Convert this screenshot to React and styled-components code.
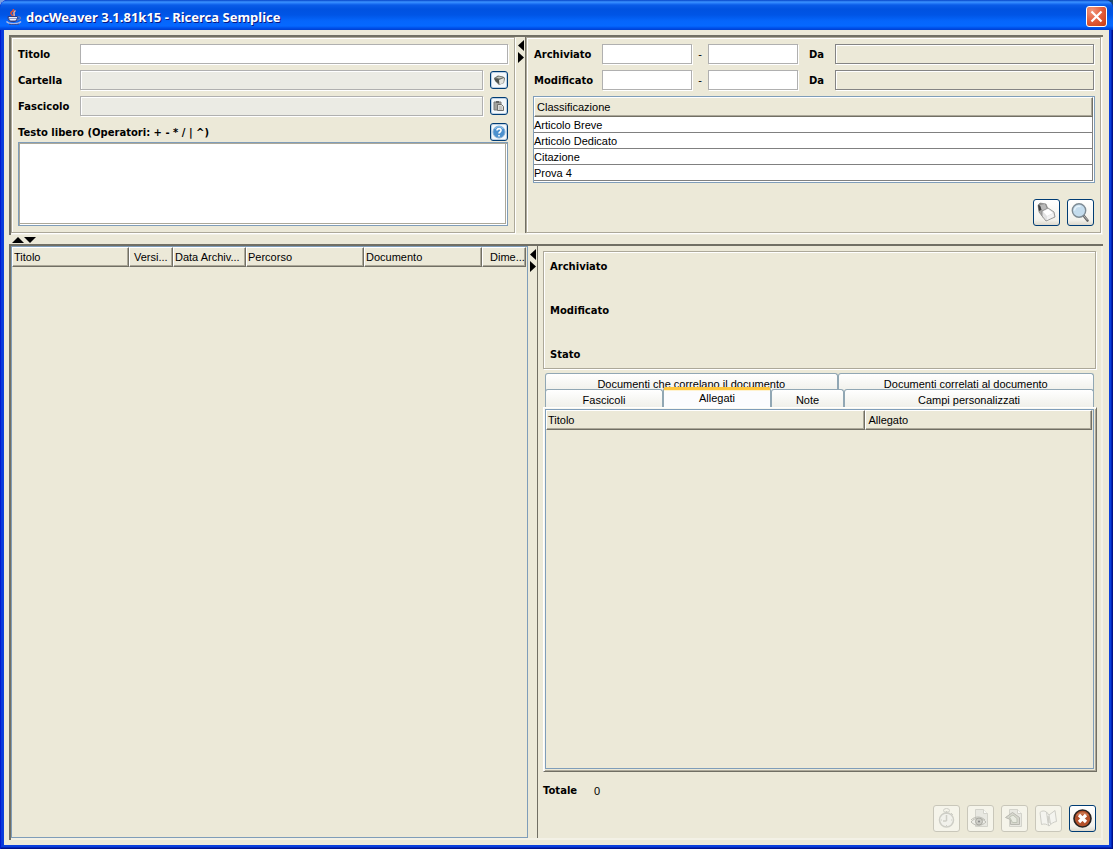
import styled, { createGlobalStyle, css } from "styled-components";

const face = "#ece9d8";
const dark = "#716f64";
const shade = "#aca899";
const blue = "#7f9db9";

const GlobalStyle = createGlobalStyle`
  * {
    box-sizing: border-box;
  }

  body {
    margin: 0;
    background: linear-gradient(90deg, #7d9fe0, #17466f);
    color: black;
    font-family: "Liberation Sans", Arial, sans-serif;
    font-size: 11px;
    line-height: 14px;
  }

  button,
  input,
  textarea {
    margin: 0;
    color: inherit;
    font: inherit;
  }
`;

const Window = styled.main`
  display: flex;
  flex-direction: column;
  min-height: 100vh;
  padding: 0 4px 4px;
  border-radius: 8px 8px 0 0;
  background: #0a3fdc;
  box-shadow: inset 1px 0 #0019cf, inset -1px -1px #00108a, inset -2px -2px #0026b8, inset 3px 0 #0839dc;
`;

const TitleBar = styled.header`
  display: flex;
  align-items: center;
  gap: 4px;
  height: 30px;
  margin: 0 -4px;
  padding: 3px 6px 0;
  border-radius: 8px 8px 0 0;
  background: linear-gradient(
    #0543c8 0,
    #3c93ff 2px,
    #2a80fb 3px,
    #0a5ce8 5px,
    #0052e0 9px,
    #0055e6 15px,
    #0566fc 21px,
    #0568ff 26px,
    #0050ea 28px,
    #0040d0 30px
  );
`;

const Title = styled.h1`
  flex: 1;
  margin: 0;
  color: white;
  font: bold 13px/18px "Noto Sans", sans-serif;
  text-shadow: 1px 1px #0a1883;
`;

const CloseButton = styled.button`
  display: grid;
  place-items: center;
  width: 21px;
  height: 21px;
  padding: 0;
  border: 1px solid white;
  border-radius: 3px;
  background: radial-gradient(circle at 25% 20%, #f0967a, #e35d3c 50%, #c93a10);
`;

const Content = styled.div`
  flex: 1;
  display: flex;
  flex-direction: column;
  padding: 5px 6px 5px 5px;
  background: ${face};
`;

const Split = styled.div`
  display: grid;
  border: solid ${dark};
  border-width: 2px 0 0 2px;
  box-shadow: inset -2px 0 #f3f1e6, inset 0 -2px #f3f1e6;
`;

const SearchSplit = styled(Split)`
  grid-template-columns: minmax(0, 504fr) 11px minmax(0, 575fr);
  padding: 0 2px 2px 0;
`;

const ResultSplit = styled(Split)`
  flex: 1;
  grid-template-columns: minmax(0, 517fr) 10px minmax(0, 563fr);
  padding: 0 2px 2px 0;
`;

const Divider = styled.div`
  display: flex;
  ${({ $row }) => ($row ? css`
    height: 9px;
    padding: 1px 3px 0;
  ` : css`
    flex-direction: column;
    align-items: flex-end;
    gap: 1px;
    padding: 3px 1px 0 0;
    border-right: 1px solid ${dark};
  `)}
`;

const ArrowButton = styled.button`
  display: block;
  padding: 0;
  border: 0;
  background: none;
  line-height: 0;

  svg {
    display: block;
  }
`;

const etched = css`
  border: 1px solid ${shade};
  box-shadow: inset 1px 1px white, 1px 1px white;
`;

const Panel = styled.section`
  ${etched}
  display: flex;
  flex-direction: column;
  gap: 6px;
  padding: ${({ $right }) => ($right ? "6px 5px 6px 6px" : "6px")};
`;

const Row = styled.div`
  display: flex;
  align-items: center;
  height: 20px;
`;

const labelText = css`
  font: bold 10px/14px "DejaVu Sans", Verdana, sans-serif;
`;

const Label = styled.label`
  ${labelText}
  flex: none;
  width: ${({ $width }) => $width};
  padding-top: 2px;
  padding-left: ${({ $indent }) => $indent || "0"};
`;

const Field = styled.input`
  flex: ${({ $width }) => ($width ? "none" : "1")};
  width: ${({ $width }) => $width || "auto"};
  min-width: 0;
  height: 20px;
  padding: 0 3px;
  border: 1px solid #b0b0b0;
  border-radius: 0;
  outline: 0;
  background: white;
  box-shadow: 1px 1px white;

  &:disabled {
    background: #ebebe4;
    box-shadow: inset 1px 1px white, 1px 1px white;
  }

  &:read-only:not(:disabled) {
    margin-right: 1px;
    border-color: #848484;
    background: ${face};
    box-shadow: inset 1px 1px white, 1px 1px white;
  }
`;

const Dash = styled.span`
  width: 16px;
  text-align: center;
`;

const FreeText = styled.div`
  display: flex;
  flex-direction: column;
`;

const TextArea = styled.textarea`
  display: block;
  width: 100%;
  height: 84px;
  padding: 2px;
  border: 1px solid ${blue};
  border-radius: 0;
  outline: 0;
  background: white;
  box-shadow: inset 1px 1px ${shade}, inset -1px -1px white, inset -2px -2px ${shade};
  resize: none;
`;

const iconButton = css`
  flex: none;
  display: grid;
  place-items: center;
  padding: 0;
  border: 1px solid #003c74;
  border-radius: 3px;
  background: linear-gradient(white, #f3f2ec 80%, #dcd8cc);
`;

const SmallButton = styled.button`
  ${iconButton}
  width: 18px;
  height: 18px;
  margin-left: ${({ $push }) => ($push ? "auto" : "7px")};
  background: #f4f8fb;
  box-shadow: inset 0 0 0 1px #bcd0e4;
`;

const ToolButton = styled.button`
  ${iconButton}
  width: 27px;
  height: 27px;

  &:disabled {
    border-color: #c9c7ba;
    background: #f5f4ea;
  }
`;

const Tools = styled.div`
  display: flex;
  justify-content: flex-end;
  gap: 7px;
  margin: ${({ $top }) => $top} 1px 0 0;
`;

const TableBox = styled.div`
  flex: ${({ $fill }) => ($fill ? "1" : "none")};
  padding: ${({ $fill }) => ($fill ? "0 1px 0 0" : "0 1px 1px 0")};
  border: 1px solid ${blue};
  background: ${({ $fill }) => ($fill ? face : "white")};
`;

const Table = styled.table`
  width: 100%;
  border-collapse: separate;
  border-spacing: 0;
  table-layout: fixed;
`;

const Th = styled.th`
  height: 20px;
  padding: 0 0 0 ${({ $indent }) => $indent || "1px"};
  overflow: hidden;
  border: solid;
  border-width: 1px;
  border-color: white ${dark} ${dark} white;
  background: ${face};
  box-shadow: inset -1px -1px ${shade};
  font-weight: normal;
  text-align: left;
  white-space: nowrap;
`;

const Td = styled.td`
  height: 16px;
  padding: 1px 0 0;
  border: solid #808080;
  border-width: 0 1px 1px 0;
`;

const Detail = styled.section`
  display: flex;
  flex-direction: column;
  padding: 5px 4px 6px 5px;
`;

const Info = styled.dl`
  ${etched}
  display: grid;
  gap: 30px;
  margin: 0 1px 4px 0;
  padding: 8px 6px 6px;

  dt {
    ${labelText}
  }
`;

const TabRow = styled.div`
  isolation: isolate;
  display: grid;
  grid-template-columns: ${({ $columns }) => $columns};
  height: ${({ $height }) => $height};
  margin: 0 3px 0 2px;
`;

const Tab = styled.button`
  display: flex;
  justify-content: center;
  align-items: flex-start;
  min-width: 0;
  padding: 3px 4px 0;
  border: solid #91a7b4;
  border-width: 1px 1px 0;
  border-radius: 3px 3px 0 0;
  background: linear-gradient(white, #f0f0ea);
  white-space: nowrap;

  &[aria-selected="true"] {
    z-index: 1;
    margin-top: -2px;
    padding-top: 1px;
    border-top: 3px solid #ffc73c;
    background: #fcfcfe;
    box-shadow: inset 0 1px #fff2cf;
  }
`;

const TabPanel = styled.div`
  flex: 1;
  display: flex;
  flex-direction: column;
  padding: 1px 2px 2px 1px;
  border: 1px solid;
  border-color: white ${dark} ${dark} white;
  box-shadow: inset 1px 1px #f8f7f0, inset -1px -1px ${shade};
`;

const Total = styled.div`
  display: flex;
  margin-top: 12px;

  output {
    padding-left: 17px;
  }
`;

const TotalLabel = styled.label`
  ${labelText}
`;

const arrows = {
  left: [6, 11, "M6 0v11L0 5.5z"],
  right: [6, 11, "M0 0v11l6-5.5z"],
  up: [12, 6, "M0 6h12L6 0z"],
  down: [12, 6, "M0 0h12L6 6z"],
};

const Arrow = ({ to, label }) => {
  const [width, height, d] = arrows[to];
  return (
    <ArrowButton type="button" aria-label={label}>
      <svg width={width} height={height}><path d={d} /></svg>
    </ArrowButton>
  );
};

const JavaIcon = () => (
  <svg width="16" height="16" viewBox="0 0 16 16" fill="none" aria-hidden="true">
    <path d="M7 0c2 2-3 3-2 4.500 0 1 1.500 1 1.500 2.500" stroke="#e8502c" strokeWidth="1.5" />
    <path d="M9.500 1.500C6 4 9 4.500 8 7" stroke="#ffb088" strokeWidth="1.5" />
    <path d="M2 7.500h9.500c0 3-1 4.500-2.500 5H5c-2-.5-3-2-3-5z" fill="#8f9bc8" stroke="#2e3c84" />
    <path d="M3 8.500h8M4 10.500h6" stroke="#e8ebf8" />
    <path d="M11.500 8c4-1 4 2.500-.5 3" stroke="#6a78b4" strokeWidth="1.2" />
    <path d="M.5 12.500c2 3 12 3 14.500 0" stroke="#aeb8e0" strokeWidth="1.5" />
    <path d="M3 15.200c3 .7 7 .7 10-.2" stroke="#36458f" />
  </svg>
);

const FolderIcon = () => (
  <svg width="13" height="12" viewBox="0 0 13 12" aria-hidden="true">
    <path d="M1 4l4-2.500 5 1 2 1.500-1 5-5 2-4-4z" fill="#6d716b" />
    <path d="M1 4.500l5 1L7 10 3 7.500z" fill="#4f534e" />
    <path d="M6 6l5-2-.5 5L6.500 10.500z" fill="#e4e4df" />
    <path d="M3 3.500l3-1 4 1-4 1z" fill="#c3c7bf" />
  </svg>
);

const PasteIcon = () => (
  <svg width="12" height="12" viewBox="0 0 12 12" aria-hidden="true">
    <path d="M1 2h7v8H1z" fill="#a2a29e" stroke="#7c7c7a" />
    <path d="M3 1h3v2H3z" fill="#666" />
    <path d="M4.500 4.500h4l2 2v4h-6z" fill="#dcdcd8" stroke="#70706e" />
    <path d="M6 7h3M6 9h3" stroke="#aaa" />
  </svg>
);

const HelpIcon = () => (
  <svg width="14" height="14" viewBox="0 0 14 14" fill="none" aria-hidden="true">
    <circle cx="7" cy="7" r="6" fill="#4c91cf" stroke="#86b1d7" />
    <path d="M3 4c2-3 6-3 8 0" stroke="#8cc1eb" />
    <path d="M5 5.500C5 3 9.500 3 9 5.500 9 7 7 7 7 8.500M7 10v1.500" stroke="white" strokeWidth="1.6" />
  </svg>
);

const EraserIcon = () => (
  <svg width="21" height="21" viewBox="0 0 21 21" aria-hidden="true">
    <path d="M2 3l2-2 6 1 2 5-6 7-3-4z" fill="#8d8d8b" stroke="#777" strokeWidth=".6" />
    <path d="M2 3l3 1 1 4-3 1z" fill="#3f3f3f" />
    <path d="M4 3l5-1 2 5-5 2z" fill="#b9b9b9" />
    <path d="M3 9l3-1 2 4-1 4z" fill="#a8a8a6" />
    <path d="M6 9l6-3 6 4 1 5-9 4-4-5z" fill="#e2e2e2" stroke="#858585" strokeWidth=".8" />
    <path d="M7 9.500l5-2.500 5 4-6 3z" fill="white" />
    <path d="M11 14.500l6-3 1 3-7 3.500z" fill="#f3f3f3" />
  </svg>
);

const SearchIcon = () => (
  <svg width="21" height="21" viewBox="0 0 21 21" aria-hidden="true">
    <path d="M13.500 13.500l4 5" stroke="#666" strokeWidth="2.6" strokeLinecap="round" />
    <path d="M14 14l3.500 4" stroke="#b5b5b5" />
    <circle cx="9" cy="8.500" r="6.700" fill="#c4dced" stroke="#7e8b94" strokeWidth="1.4" />
    <path d="M4.500 8.500c0-3 3-5 6-4" fill="none" stroke="#e6f3fb" strokeWidth="1.5" />
  </svg>
);

const WatchIcon = () => (
  <svg width="21" height="21" viewBox="0 0 21 21" fill="none" stroke="#cecec6" aria-hidden="true">
    <circle cx="10.500" cy="12" r="7" fill="#f1f1eb" strokeWidth="1.5" />
    <ellipse cx="10.500" cy="2.500" rx="3" ry="2" />
    <path d="M10.500 3v3M10.500 7v6M7 13h3.500" strokeWidth="1.5" />
    <path d="M15 5l2 2M5 12h1M15 12h1M10.500 17v1" />
  </svg>
);

const Page = ({ children }) => (
  <svg width="21" height="21" viewBox="0 0 21 21" fill="none" stroke="#d3d3cb" aria-hidden="true">
    <path d="M5.500 1.500h8l4 4v13h-12z" fill="#e8e8e1" />
    <path d="M13.500 1.500v4h4" fill="#fafaf6" />
    {children}
  </svg>
);

const ViewIcon = () => (
  <Page>
    <path d="M1 14c4-5 10-5 15 0-4 4-10 5-15 0z" fill="#eeeee8" stroke="#bcbcb4" />
    <circle cx="9" cy="13.500" r="3.500" fill="#cdcdc6" stroke="#aaaaa2" />
    <circle cx="9" cy="13.500" r="1" fill="#888" stroke="none" />
    <path d="M1 12c4-4 10-4 14 0" stroke="#bcbcb4" />
  </Page>
);

const ExportIcon = () => (
  <Page>
    <path d="M1.500 9.500l7-5 7 5v7h-9v-5z" fill="#d7d7ce" stroke="#b8b8b0" />
    <path d="M5.500 9l3.500-2 4 3.500v4H8.500z" fill="#e8eae0" stroke="#bfc4b6" />
  </Page>
);

const BookIcon = () => (
  <svg width="21" height="21" viewBox="0 0 21 21" fill="#f4f4ef" stroke="#cecec7" aria-hidden="true">
    <path d="M2 4.500c2-2 4-2 6.500-.5L11 7l6-4.500 1.500 11c-3 .5-5 2-7.500 4.500-2-2-5-2.500-7.500-1.500z" />
    <path d="M8.500 4L10 15l1 3M11 7l1.500 9" fill="none" />
    <path d="M10 8l1 7" strokeWidth="1.5" fill="none" />
  </svg>
);

const StopIcon = () => (
  <svg width="21" height="21" viewBox="0 0 21 21" aria-hidden="true">
    <circle cx="10.500" cy="10.500" r="8.500" fill="#b4512b" stroke="#282321" strokeWidth="1.6" />
    <path d="M4 8c2-5 11-5 13 0-4-2-9-2-13 0z" fill="#cc7a54" />
    <path d="M7 7l7 7M14 7l-7 7" stroke="white" strokeWidth="3.2" />
  </svg>
);

const classes = ["Articolo Breve", "Articolo Dedicato", "Citazione", "Prova 4"];

const resultColumns = [
  { name: "Titolo", width: "117px" },
  { name: "Versi...", width: "44px", indent: "4px" },
  { name: "Data Archiv...", width: "73px" },
  { name: "Percorso", width: "118px" },
  { name: "Documento", width: "118px" },
  { name: "Dime...", indent: "7px" },
];

const attachmentColumns = [
  { name: "Titolo", width: "58.500%" },
  { name: "Allegato", indent: "2px" },
];

const Columns = ({ columns }) => (
  <Table>
    <colgroup>
      {columns.map(({ name, width }) => <col key={name} width={width} />)}
    </colgroup>
    <thead>
      <tr>
        {columns.map(({ name, indent }) => (
          <Th key={name} scope="col" $indent={indent}>{name}</Th>
        ))}
      </tr>
    </thead>
  </Table>
);

const DateRow = ({ id, label }) => (
  <Row>
    <Label htmlFor={id} $width="69px" $indent="1px">{label}</Label>
    <Field id={id} $width="90px" />
    <Dash>-</Dash>
    <Field $width="90px" aria-label={`${label} fino a`} />
    <Label htmlFor={`${id}-da`} $width="37px" $indent="11px">Da</Label>
    <Field id={`${id}-da`} readOnly />
  </Row>
);

const App = () => (
  <Window>
    <GlobalStyle />
    <TitleBar>
      <JavaIcon />
      <Title>docWeaver 3.1.81k15 - Ricerca Semplice</Title>
      <CloseButton type="button" aria-label="Chiudi">
        <svg width="13" height="13" stroke="white" strokeWidth="2.2">
          <path d="M1.500 1.500l10 10M11.500 1.500l-10 10" />
        </svg>
      </CloseButton>
    </TitleBar>
    <Content>
      <SearchSplit>
        <Panel>
          <Row>
            <Label htmlFor="titolo" $width="62px">Titolo</Label>
            <Field id="titolo" />
          </Row>
          <Row>
            <Label htmlFor="cartella" $width="62px">Cartella</Label>
            <Field id="cartella" disabled />
            <SmallButton type="button" aria-label="Scegli cartella"><FolderIcon /></SmallButton>
          </Row>
          <Row>
            <Label htmlFor="fascicolo" $width="62px">Fascicolo</Label>
            <Field id="fascicolo" disabled />
            <SmallButton type="button" aria-label="Scegli fascicolo"><PasteIcon /></SmallButton>
          </Row>
          <FreeText>
            <Row>
              <Label htmlFor="testo">Testo libero (Operatori: + - * / | ^)</Label>
              <SmallButton type="button" aria-label="Aiuto" $push><HelpIcon /></SmallButton>
            </Row>
            <TextArea id="testo" />
          </FreeText>
        </Panel>
        <Divider>
          <Arrow to="left" label="Comprimi a sinistra" />
          <Arrow to="right" label="Comprimi a destra" />
        </Divider>
        <Panel $right>
          <DateRow id="archiviato" label="Archiviato" />
          <DateRow id="modificato" label="Modificato" />
          <TableBox>
            <Table>
              <thead>
                <tr><Th scope="col" $indent="2px">Classificazione</Th></tr>
              </thead>
              <tbody>
                {classes.map((name) => <tr key={name}><Td>{name}</Td></tr>)}
              </tbody>
            </Table>
          </TableBox>
          <Tools $top="10px">
            <ToolButton type="button" aria-label="Pulisci"><EraserIcon /></ToolButton>
            <ToolButton type="button" aria-label="Cerca"><SearchIcon /></ToolButton>
          </Tools>
        </Panel>
      </SearchSplit>
      <Divider $row>
        <Arrow to="up" label="Comprimi in alto" />
        <Arrow to="down" label="Comprimi in basso" />
      </Divider>
      <ResultSplit>
        <TableBox $fill>
          <Columns columns={resultColumns} />
        </TableBox>
        <Divider>
          <Arrow to="left" label="Comprimi a sinistra" />
          <Arrow to="right" label="Comprimi a destra" />
        </Divider>
        <Detail>
          <Info>
            <dt>Archiviato</dt>
            <dt>Modificato</dt>
            <dt>Stato</dt>
          </Info>
          <div role="tablist">
            <TabRow $columns="292fr 256fr" $height="16px">
              <Tab type="button" role="tab" aria-selected="false">Documenti che correlano il documento</Tab>
              <Tab type="button" role="tab" aria-selected="false">Documenti correlati al documento</Tab>
            </TabRow>
            <TabRow $columns="118fr 108fr 73fr 250fr" $height="18px">
              <Tab type="button" role="tab" aria-selected="false">Fascicoli</Tab>
              <Tab type="button" role="tab" aria-selected="true">Allegati</Tab>
              <Tab type="button" role="tab" aria-selected="false">Note</Tab>
              <Tab type="button" role="tab" aria-selected="false">Campi personalizzati</Tab>
            </TabRow>
          </div>
          <TabPanel role="tabpanel">
            <TableBox $fill>
              <Columns columns={attachmentColumns} />
            </TableBox>
          </TabPanel>
          <Total>
            <TotalLabel htmlFor="totale">Totale</TotalLabel>
            <output id="totale">0</output>
          </Total>
          <Tools $top="7px">
            <ToolButton type="button" aria-label="Cronologia" disabled><WatchIcon /></ToolButton>
            <ToolButton type="button" aria-label="Visualizza" disabled><ViewIcon /></ToolButton>
            <ToolButton type="button" aria-label="Esporta" disabled><ExportIcon /></ToolButton>
            <ToolButton type="button" aria-label="Leggi" disabled><BookIcon /></ToolButton>
            <ToolButton type="button" aria-label="Esci"><StopIcon /></ToolButton>
          </Tools>
        </Detail>
      </ResultSplit>
    </Content>
  </Window>
);

export default App;
